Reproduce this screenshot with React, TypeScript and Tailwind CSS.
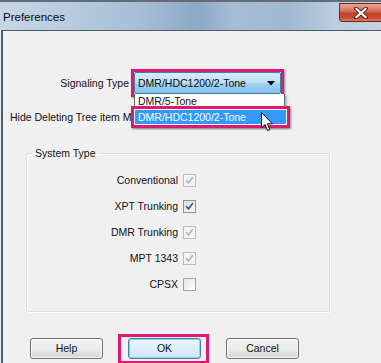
import React from "react";

type CbState = "disabledChecked" | "checked" | "unchecked";

function Check({ color }: { color: string }) {
  return (
    <svg width="11" height="11" viewBox="0 0 11 11" className="block">
      <path d="M2.5 5.5 L4.5 8 L8.5 2.5" fill="none" stroke={color} strokeWidth="1.6" strokeLinecap="round" strokeLinejoin="round" />
    </svg>
  );
}

function CheckBox({ state }: { state: CbState }) {
  if (state === "disabledChecked") {
    return (
      <div className="w-[13px] h-[13px] border border-[#bcbcbc] bg-[#f4f4f4] flex items-center justify-center">
        <Check color="#b5b5b5" />
      </div>
    );
  }
  if (state === "checked") {
    return (
      <div className="w-[13px] h-[13px] border border-[#8e8f8f] bg-gradient-to-br from-[#dcdcdc] to-[#fbfbfb] flex items-center justify-center">
        <Check color="#3b4f8a" />
      </div>
    );
  }
  return <div className="w-[13px] h-[13px] border border-[#a3a3a3] bg-gradient-to-br from-[#e6e6e6] to-[#ffffff]" />;
}

function Row({ label, state }: { label: string; state: CbState }) {
  return (
    <div className="h-[26px] flex items-center">
      <div className="w-[151px] text-right text-[#111]">{label}</div>
      <div className="ml-[5px]">
        <CheckBox state={state} />
      </div>
    </div>
  );
}

function Btn({ label, def }: { label: string; def?: boolean }) {
  return (
    <div
      className={
        "w-[73px] h-[21px] rounded-[3px] border flex items-center justify-center text-[#111] " +
        (def
          ? "border-[#3c7fb1] bg-gradient-to-b from-[#eaf6fd] to-[#cfe6f5] shadow-[inset_0_0_0_1px_#8fd2f2]"
          : "border-[#707070] bg-gradient-to-b from-[#f2f2f2] via-[#ebebeb] to-[#d6d6d6] shadow-[inset_0_0_0_1px_#fbfbfb]")
      }
    >
      {label}
    </div>
  );
}

export default function App() {
  return (
    <div className="w-[381px] h-[363px] overflow-hidden relative bg-[#f0f0f0] font-['Liberation_Sans',Arial,sans-serif] text-[10.5px] leading-[13px] text-black">
      {/* Title bar */}
      <div className="h-[30px] flex items-start justify-between border-t-2 border-[#636c76] bg-[linear-gradient(90deg,#c6d5e5_0%,#b8cbdf_18%,#a9bfd6_35%,#8ea9c5_52%,#a7bdd4_62%,#9fb7cf_75%,#bccde0_88%,#c3d3e4_100%)]">
        <div className="pl-[3px] pt-[8px] text-[11.5px] leading-[14px] text-[#0b0b0b]">Preferences</div>
        <div className="mt-[1px] w-[42px] h-[19px] rounded-bl-[4px] border border-r-0 border-[#6b2a20] bg-[linear-gradient(180deg,#e8a596_0%,#d8735f_40%,#c1432d_55%,#c74a33_80%,#de7a5c_100%)] flex items-center justify-center">
          <svg width="14" height="12" viewBox="0 0 14 12">
            <path d="M2 1.5 L12 10.5 M12 1.5 L2 10.5" stroke="#5a2a22" strokeWidth="4" strokeLinecap="square" />
            <path d="M2.5 2 L11.5 10 M11.5 2 L2.5 10" stroke="#ffffff" strokeWidth="2.2" strokeLinecap="square" />
          </svg>
        </div>
      </div>

      {/* Body */}
      <div className="ml-[1px] h-[333px] border-l-2 border-t border-[#4d5a68] flex flex-col">
        {/* Signaling Type */}
        <div className="mt-[38px] flex items-center">
          <div className="w-[126px] text-right text-[#111]">Signaling Type</div>
          <div className="ml-[2px] relative z-10 w-[153px] h-[28px] border-[3px] border-[#dc1a72] shadow-[1px_1px_2px_rgba(0,0,0,0.45)]">
            <div className="h-full flex items-center justify-between pl-[3px] pr-[5px] border border-[#3c7fb1] rounded-[2px] bg-[linear-gradient(180deg,#d6ecfa_0%,#bfe0f6_45%,#9dd0f1_55%,#86c3ec_100%)] text-[#0c0c0c]">
              <span>DMR/HDC1200/2-Tone</span>
              <svg width="8" height="5" viewBox="0 0 8 5">
                <path d="M0 0 L8 0 L4 4.5 Z" fill="#000" />
              </svg>
            </div>
            {/* Dropdown list */}
            <div className="absolute left-0 top-[22px] w-[151px] h-[32px] bg-white border border-[#646464] border-t-0 shadow-[2px_2px_2px_rgba(0,0,0,0.25)]">
              <div className="pl-[3px] pt-[1px] h-[12px] leading-[12px] text-[#111]">DMR/5-Tone</div>
              <div className="absolute left-[-4px] top-[12px] w-[159px] h-[22px] border-[3px] border-[#dc1a72] shadow-[1px_1px_2px_rgba(0,0,0,0.45)] bg-white p-px">
                <div className="h-full bg-[#3399ff] text-white pl-[3px] flex items-center">DMR/HDC1200/2-Tone</div>
              </div>
            </div>
          </div>
        </div>

        {/* Hide Deleting row (partly covered by the open list) */}
        <div className="mt-[12px] h-[16px] pl-[7px] flex items-center text-[#111] whitespace-nowrap">
          Hide Deleting Tree item Message
        </div>

        {/* System Type group */}
        <fieldset className="mt-[22px] ml-[23px] w-[304px] border border-[#d5dfe5] rounded-[3px] shadow-[inset_1px_1px_0_#ffffff,1px_1px_0_#ffffff] px-0 pb-[14px] pt-[7px]">
          <legend className="ml-[5px] px-[3px] leading-[13px] text-[#111]">System Type</legend>
          <Row label="Conventional" state="disabledChecked" />
          <Row label="XPT Trunking" state="checked" />
          <Row label="DMR Trunking" state="disabledChecked" />
          <Row label="MPT 1343" state="disabledChecked" />
          <Row label="CPSX" state="unchecked" />
        </fieldset>

        {/* Buttons */}
        <div className="mt-[26px] pl-[27px] flex gap-[25px]">
          <Btn label="Help" />
          <div className="relative">
            <Btn label="OK" def />
            <div className="absolute left-[-10px] top-[-4px] w-[91px] h-[30px] border-[3px] border-[#dc1a72]" />
          </div>
          <Btn label="Cancel" />
        </div>
      </div>

      {/* Mouse cursor */}
      <svg className="absolute z-20 left-[261px] top-[112px]" width="13" height="21" viewBox="0 0 13 21">
        <path d="M0.5 0.5 L0.5 16 L4 12.5 L6.5 18.5 L8.8 17.5 L6.4 11.8 L11.5 11.8 Z" fill="#fff" stroke="#000" strokeWidth="1" strokeLinejoin="miter" />
      </svg>
    </div>
  );
}
